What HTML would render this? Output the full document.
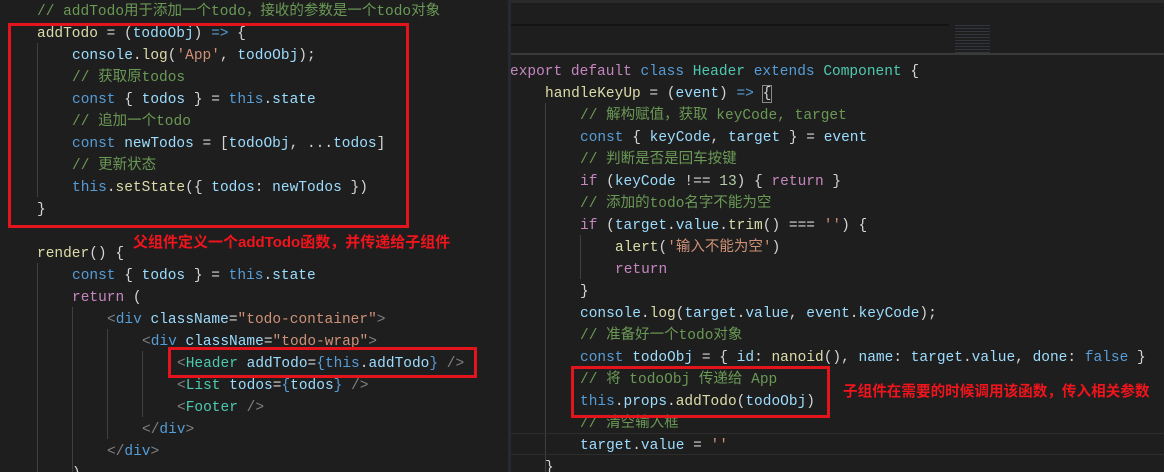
<!DOCTYPE html><html><head><meta charset="utf-8"><style>
html,body{margin:0;width:1164px;height:472px;overflow:hidden}
body{background:#1e1e1e;position:relative;font-family:"Liberation Mono","Noto Sans CJK SC",monospace;font-size:14.5px;color:#d4d4d4}
.l{position:absolute;white-space:pre;height:22px;line-height:22px;margin-top:2px}
.c{color:#6a9955}.k{color:#569cd6}.v{color:#9cdcfe}.f{color:#dcdcaa}.s{color:#ce9178}.p{color:#c586c0}.t{color:#4ec9b0}.n{color:#b5cea8}.g{color:#808080}
.box{position:absolute;border:3px solid #e3141c;box-sizing:border-box}
.ann{position:absolute;color:#f0141c;font-family:"Liberation Sans","Noto Sans CJK SC",sans-serif;font-weight:bold;font-size:15px;white-space:nowrap}
.ig{position:absolute;width:1px;background:#404040}
</style></head><body>
<div style="position:absolute;left:509px;top:0;width:655px;height:3px;background:#2a2a2a"></div>
<div style="position:absolute;left:509px;top:24px;width:440px;height:2px;background:#141414"></div>
<div style="position:absolute;left:509px;top:53px;width:655px;height:2px;background:#3a3a3a"></div>
<div style="position:absolute;left:510px;top:0;width:1px;height:472px;background:#1f2a3a"></div>
<div style="position:absolute;left:508px;top:0;width:2px;height:472px;background:#2a2a2a"></div>
<div style="position:absolute;left:955px;top:25px;width:35px;height:28px;opacity:.25;background:repeating-linear-gradient(#6a7fa0 0 1px,transparent 1px 3px)"></div>
<div class="ig" style="left:37px;top:43px;height:154px"></div>
<div class="ig" style="left:37px;top:263px;height:209px"></div>
<div class="ig" style="left:72px;top:307px;height:165px"></div>
<div class="ig" style="left:107px;top:329px;height:110px"></div>
<div class="ig" style="left:142px;top:351px;height:66px"></div>
<div class="ig" style="left:545px;top:103px;height:369px"></div>
<div class="ig" style="left:580px;top:235px;height:44px"></div>

<div class="l c" style="left:37px;top:-1px">// addTodo用于添加一个todo，接收的参数是一个todo对象</div>
<div class="l" style="left:37px;top:21px"><span class="f">addTodo</span> = (<span class="v">todoObj</span>) <span class="k">=&gt;</span> {</div>
<div class="l" style="left:72px;top:43px"><span class="v">console</span>.<span class="f">log</span>(<span class="s">'App'</span>, <span class="v">todoObj</span>);</div>
<div class="l c" style="left:72px;top:65px">// 获取原todos</div>
<div class="l" style="left:72px;top:87px"><span class="k">const</span> { <span class="v">todos</span> } = <span class="k">this</span>.<span class="v">state</span></div>
<div class="l c" style="left:72px;top:109px">// 追加一个todo</div>
<div class="l" style="left:72px;top:131px"><span class="k">const</span> <span class="v">newTodos</span> = [<span class="v">todoObj</span>, ...<span class="v">todos</span>]</div>
<div class="l c" style="left:72px;top:153px">// 更新状态</div>
<div class="l" style="left:72px;top:175px"><span class="k">this</span>.<span class="f">setState</span>({ <span class="v">todos</span>: <span class="v">newTodos</span> })</div>
<div class="l" style="left:37px;top:197px">}</div>
<div class="l" style="left:37px;top:241px"><span class="f">render</span>() {</div>
<div class="l" style="left:72px;top:263px"><span class="k">const</span> { <span class="v">todos</span> } = <span class="k">this</span>.<span class="v">state</span></div>
<div class="l" style="left:72px;top:285px"><span class="p">return</span> (</div>
<div class="l" style="left:107px;top:307px"><span class="g">&lt;</span><span class="k">div</span> <span class="v">className</span>=<span class="s">"todo-container"</span><span class="g">&gt;</span></div>
<div class="l" style="left:142px;top:329px"><span class="g">&lt;</span><span class="k">div</span> <span class="v">className</span>=<span class="s">"todo-wrap"</span><span class="g">&gt;</span></div>
<div class="l" style="left:177px;top:351px"><span class="g">&lt;</span><span class="t">Header</span> <span class="v">addTodo</span>=<span class="k">{</span><span class="k">this</span>.<span class="v">addTodo</span><span class="k">}</span> <span class="g">/&gt;</span></div>
<div class="l" style="left:177px;top:373px"><span class="g">&lt;</span><span class="t">List</span> <span class="v">todos</span>=<span class="k">{</span><span class="v">todos</span><span class="k">}</span> <span class="g">/&gt;</span></div>
<div class="l" style="left:177px;top:395px"><span class="g">&lt;</span><span class="t">Footer</span> <span class="g">/&gt;</span></div>
<div class="l" style="left:142px;top:417px"><span class="g">&lt;/</span><span class="k">div</span><span class="g">&gt;</span></div>
<div class="l" style="left:107px;top:439px"><span class="g">&lt;/</span><span class="k">div</span><span class="g">&gt;</span></div>
<div class="l" style="left:72px;top:461px">)</div>

<div class="box" style="left:8px;top:23px;width:401px;height:205px"></div>
<div class="box" style="left:168px;top:347px;width:309px;height:31px"></div>
<div class="ann" style="left:133px;top:231px">父组件定义一个addTodo函数，并传递给子组件</div>

<div class="l" style="left:510px;top:59px"><span class="p">export</span> <span class="p">default</span> <span class="k">class</span> <span class="t">Header</span> <span class="k">extends</span> <span class="t">Component</span> {</div>
<div class="l" style="left:545px;top:81px"><span class="f">handleKeyUp</span> = (<span class="v">event</span>) <span class="k">=&gt;</span> <span style="outline:1px solid #888">{</span></div>
<div class="l c" style="left:580px;top:103px">// 解构赋值，获取 keyCode, target</div>
<div class="l" style="left:580px;top:125px"><span class="k">const</span> { <span class="v">keyCode</span>, <span class="v">target</span> } = <span class="v">event</span></div>
<div class="l c" style="left:580px;top:147px">// 判断是否是回车按键</div>
<div class="l" style="left:580px;top:169px"><span class="p">if</span> (<span class="v">keyCode</span> !== <span class="n">13</span>) { <span class="p">return</span> }</div>
<div class="l c" style="left:580px;top:191px">// 添加的todo名字不能为空</div>
<div class="l" style="left:580px;top:213px"><span class="p">if</span> (<span class="v">target</span>.<span class="v">value</span>.<span class="f">trim</span>() === <span class="s">''</span>) {</div>
<div class="l" style="left:615px;top:235px"><span class="f">alert</span>(<span class="s">'输入不能为空'</span>)</div>
<div class="l p" style="left:615px;top:257px">return</div>
<div class="l" style="left:580px;top:279px">}</div>
<div class="l" style="left:580px;top:301px"><span class="v">console</span>.<span class="f">log</span>(<span class="v">target</span>.<span class="v">value</span>, <span class="v">event</span>.<span class="v">keyCode</span>);</div>
<div class="l c" style="left:580px;top:323px">// 准备好一个todo对象</div>
<div class="l" style="left:580px;top:345px"><span class="k">const</span> <span class="v">todoObj</span> = { <span class="v">id</span>: <span class="f">nanoid</span>(), <span class="v">name</span>: <span class="v">target</span>.<span class="v">value</span>, <span class="v">done</span>: <span class="k">false</span> }</div>
<div class="l c" style="left:580px;top:367px">// 将 todoObj 传递给 App</div>
<div class="l" style="left:580px;top:389px"><span class="k">this</span>.<span class="v">props</span>.<span class="f">addTodo</span>(<span class="v">todoObj</span>)</div>
<div class="l c" style="left:580px;top:411px">// 清空输入框</div>
<div style="position:absolute;left:511px;top:433px;width:653px;height:22px;border-top:1px solid #2d2d2d;border-bottom:1px solid #2d2d2d;box-sizing:border-box"></div>
<div class="l" style="left:580px;top:433px"><span class="v">target</span>.<span class="v">value</span> = <span class="s">''</span></div>
<div class="l" style="left:545px;top:455px">}</div>

<div class="box" style="left:571px;top:366px;width:259px;height:52px"></div>
<div class="ann" style="left:843px;top:380px;font-size:14.6px">子组件在需要的时候调用该函数，传入相关参数</div>
</body></html>
